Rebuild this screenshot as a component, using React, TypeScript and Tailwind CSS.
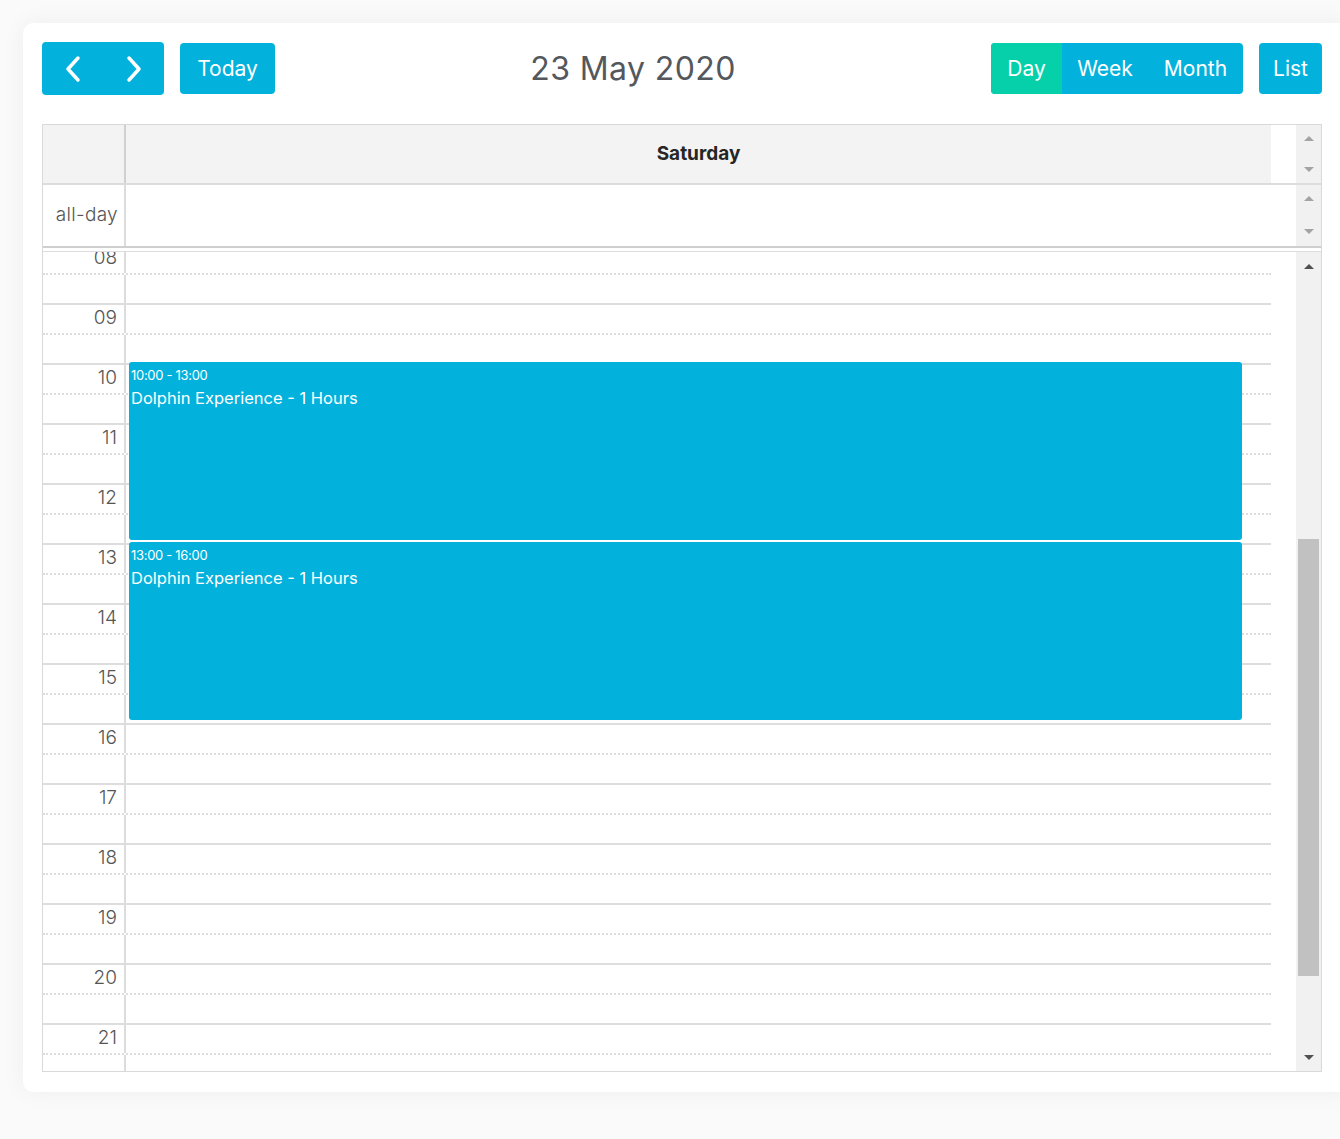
import React from 'react';

interface CalEvent {
  id: number;
  time: string;
  title: string;
  start: number;
  end: number;
}

const events: CalEvent[] = [
  { id: 1, time: '10:00 - 13:00', title: 'Dolphin Experience - 1 Hours', start: 10, end: 13 },
  { id: 2, time: '13:00 - 16:00', title: 'Dolphin Experience - 1 Hours', start: 13, end: 16 },
];

const hours = ['08', '09', '10', '11', '12', '13', '14', '15', '16', '17', '18', '19', '20', '21', '22'];

const FIRST_HOUR = 8;
const HOUR_PX = 60;
const SCROLL_OFFSET = 9;

const ArrowUp = ({ dark = false }: { dark?: boolean }) => (
  <div
    className={`w-0 h-0 border-l-[5px] border-r-[5px] border-l-transparent border-r-transparent border-b-[5px] ${
      dark ? 'border-b-[#505050]' : 'border-b-[#a3a3a3]'
    }`}
  />
);

const ArrowDown = ({ dark = false }: { dark?: boolean }) => (
  <div
    className={`w-0 h-0 border-l-[5px] border-r-[5px] border-l-transparent border-r-transparent border-t-[5px] ${
      dark ? 'border-t-[#505050]' : 'border-t-[#a3a3a3]'
    }`}
  />
);

const App: React.FC = () => {
  return (
    <div
      className="h-[1139px] overflow-hidden bg-[#fafafa] pt-[23px] pl-[23px]"
      style={{ fontFamily: 'Inter, "Noto Sans", sans-serif' }}
    >
      <div className="w-[1330px] bg-white rounded-[10px] shadow-[0_0_24px_rgba(0,0,0,0.05)] pt-[19px] pb-[20px] pl-[19px]">
        <div className="w-[1280px]">
          {/* Toolbar */}
          <div className="flex items-center justify-between h-[53px]">
            <div className="flex items-center gap-[16px]">
              <div className="flex h-[53px] rounded-[4px] overflow-hidden bg-[#03b2dc]">
                <button className="w-[61px] flex items-center justify-center">
                  <svg width="18" height="28" viewBox="0 0 18 28">
                    <polyline points="14,3 4,14 14,25" fill="none" stroke="white" strokeWidth="3.5" strokeLinecap="round" strokeLinejoin="round" />
                  </svg>
                </button>
                <button className="w-[61px] flex items-center justify-center">
                  <svg width="18" height="28" viewBox="0 0 18 28">
                    <polyline points="4,3 14,14 4,25" fill="none" stroke="white" strokeWidth="3.5" strokeLinecap="round" strokeLinejoin="round" />
                  </svg>
                </button>
              </div>
              <button className="h-[51px] w-[95px] rounded-[4px] bg-[#03b2dc] text-white text-[21px]">
                Today
              </button>
            </div>

            <h2 className="text-[32px] text-[#54585d] font-normal tracking-[0.4px]">23 May 2020</h2>

            <div className="flex items-center gap-[16px]">
              <div className="flex h-[51px] rounded-[4px] overflow-hidden bg-[#03b2dc] text-white text-[21px]">
                <button className="w-[71px] bg-[#06d0a9]">Day</button>
                <button className="w-[86px]">Week</button>
                <button className="w-[95px]">Month</button>
              </div>
              <button className="h-[51px] w-[63px] rounded-[4px] bg-[#03b2dc] text-white text-[21px]">List</button>
            </div>
          </div>

          {/* Calendar table */}
          <div className="mt-[29px] border border-[#d9d9d9]">
            {/* Day header */}
            <div className="flex h-[60px] border-b-2 border-[#dcdcdc]">
              <div className="w-[83px] bg-[#f3f3f3] border-r-2 border-[#d0d0d0]" />
              <div className="flex-1 bg-[#f3f3f3] flex items-center justify-center text-[19px] font-bold text-[#262626]">
                Saturday
              </div>
              <div className="w-[25px]" />
              <div className="w-[25px] bg-[#f1f1f1] flex flex-col items-center justify-between py-[11px]">
                <ArrowUp />
                <ArrowDown />
              </div>
            </div>

            {/* All-day row */}
            <div className="flex h-[63px] border-b-2 border-[#cfcfcf]">
              <div className="w-[83px] border-r-2 border-[#dcdcdc] flex items-center justify-end pr-[6px] text-[19px] font-light text-[#555] tracking-[0.3px]">
                all-day
              </div>
              <div className="flex-1" />
              <div className="w-[25px]" />
              <div className="w-[25px] bg-[#f1f1f1] flex flex-col items-center justify-between pt-[11px] pb-[12px]">
                <ArrowUp />
                <ArrowDown />
              </div>
            </div>
            <div className="h-[3px]" />

            {/* Time grid */}
            <div className="flex h-[820px] border-t border-[#dddddd]">
              <div className="flex-1 relative overflow-hidden">
                <div className="-mt-[9px]">
                  {hours.map((h) => (
                    <React.Fragment key={h}>
                      <div className="flex h-[30px] border-t-2 border-[#dddddd]">
                        <div className="w-[83px] border-r-2 border-[#dcdcdc] text-right pr-[7px] pt-[1px] text-[19px] leading-[24px] font-light text-[#555]">
                          {h}
                        </div>
                        <div className="flex-1" />
                      </div>
                      <div className="flex h-[30px] border-t-2 border-dotted border-[#dddddd]">
                        <div className="w-[83px] border-r-2 border-[#dcdcdc]" />
                        <div className="flex-1" />
                      </div>
                    </React.Fragment>
                  ))}
                </div>

                {events.map((ev) => (
                  <div
                    key={ev.id}
                    className="absolute left-[86px] right-[29px] rounded-[3px] bg-[#03b2dc] text-white px-[2px] pt-[5px]"
                    style={{
                      top: (ev.start - FIRST_HOUR) * HOUR_PX - SCROLL_OFFSET - 1,
                      height: (ev.end - ev.start) * HOUR_PX - 2,
                    }}
                  >
                    <div className="text-[13px] leading-[16px] tracking-[-0.3px]">{ev.time}</div>
                    <div className="text-[16.5px] leading-[22px] mt-[4px]">{ev.title}</div>
                  </div>
                ))}
              </div>
              <div className="w-[25px]" />
              <div className="w-[25px] bg-[#f1f1f1] flex flex-col">
                <div className="h-[28px] flex items-center justify-center">
                  <ArrowUp dark />
                </div>
                <div className="h-[259px]" />
                <div className="h-[437px] mx-[2px] bg-[#c1c1c1]" />
                <div className="flex-1" />
                <div className="h-[28px] flex items-center justify-center">
                  <ArrowDown dark />
                </div>
              </div>
            </div>
          </div>
        </div>
      </div>
    </div>
  );
};

export default App;
